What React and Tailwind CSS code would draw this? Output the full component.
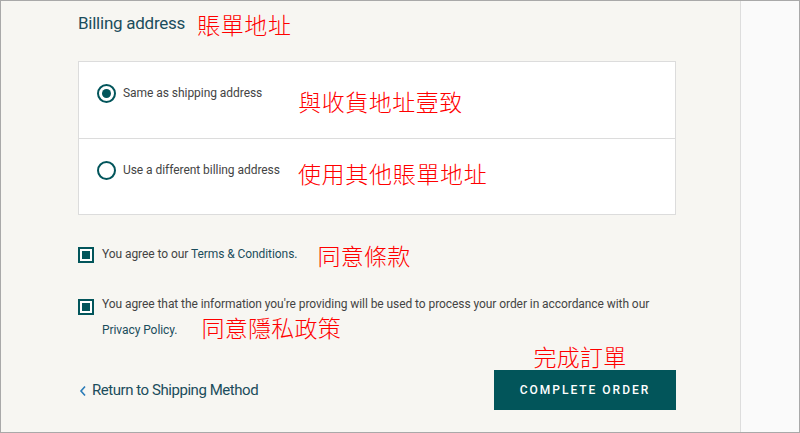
export default function App() {
  const zh = { fontFamily: '"Noto Sans CJK TC", "Noto Sans CJK SC", serif', fontWeight: 300 };
  const ro = { fontFamily: 'Roboto, "Liberation Sans", sans-serif' };
  return (
    <div className="w-[800px] h-[433px] border border-[#a9a9a9] flex overflow-hidden" style={ro}>
      <div className="w-[739px] h-full bg-[#f7f6f2] pl-[77px] pt-[10px]">
        <div className="flex items-center h-[26px]">
          <span className="text-[17px] text-[#1b4d5c] tracking-[-0.25px]">Billing address</span>
          <span className="ml-[12px] text-[23px] tracking-[0.6px] text-[#ff0000] leading-none" style={zh}>賬單地址</span>
        </div>
        <div className="mt-[24px] w-[598px] border border-[#dcdcdc] bg-white">
          <div className="h-[76px] flex items-start pl-[18px] pt-[22px]">
            <div className="w-[19px] h-[19px] rounded-full border-[2.5px] border-[#02555b] flex items-center justify-center shrink-0">
              <div className="w-[9px] h-[9px] rounded-full bg-[#02555b]" />
            </div>
            <span className="ml-[7px] text-[12px] text-[#444] leading-[18px] tracking-[-0.05px]">Same as shipping address</span>
            <span className="ml-[36px] mt-[6px] text-[23px] tracking-[0.5px] leading-none text-[#ff0000]" style={zh}>與收貨地址壹致</span>
          </div>
          <div className="h-[76px] flex items-start pl-[18px] pt-[22px] border-t border-[#dcdcdc]">
            <div className="w-[19px] h-[19px] rounded-full border-[2px] border-[#02555b] shrink-0" />
            <span className="ml-[7px] text-[12px] text-[#444] leading-[18px] tracking-[-0.05px]">Use a different billing address</span>
            <span className="ml-[18px] mt-[1px] text-[23px] tracking-[0.7px] leading-none text-[#ff0000]" style={zh}>使用其他賬單地址</span>
          </div>
        </div>
        <div className="mt-[28px] flex items-start">
          <div className="mt-[4px] w-[16px] h-[16px] border-2 border-[#02555b] bg-white p-[2px] shrink-0">
            <div className="w-full h-full bg-[#02555b]" />
          </div>
          <span className="ml-[8px] text-[12px] leading-[23px] text-[#444] tracking-[-0.07px]">You agree to our <span className="text-[#1b4d5c]">Terms &amp; Conditions.</span></span>
          <span className="ml-[20px] mt-[1px] text-[23px] tracking-[0.3px] leading-none text-[#ff0000]" style={zh}>同意條款</span>
        </div>
        <div className="mt-[26px] flex items-start w-[598px]">
          <div className="mt-[6px] w-[16px] h-[16px] border-2 border-[#02555b] bg-white p-[2px] shrink-0">
            <div className="w-full h-full bg-[#02555b]" />
          </div>
          <p className="ml-[8px] text-[12px] leading-[23px] text-[#444] tracking-[-0.07px]">
            You agree that the information you're providing will be used to process your order in accordance with our{" "}
            <br />
            <span className="text-[#1b4d5c]">Privacy Policy.</span>
            <span className="ml-[24px] text-[23px] tracking-[0.3px] leading-none text-[#ff0000] align-[-3px]" style={zh}>同意隱私政策</span>
          </p>
        </div>
        <div className="w-[598px] flex justify-between items-end mt-[1px]">
          <div className="flex items-center h-[41px] text-[15px] text-[#1b4d5c] tracking-[-0.45px]">
            <svg width="8" height="12" viewBox="0 0 8 12" className="ml-[1px] mr-[5px]">
              <path d="M6 1.5 L2 6 L6 10.5" fill="none" stroke="#2a7bb8" strokeWidth="1.6" />
            </svg>
            Return to Shipping Method
          </div>
          <div className="flex flex-col items-center">
            <span className="text-[23px] leading-[27px] tracking-[0.3px] text-[#ff0000] mr-[10px]" style={zh}>完成訂單</span>
            <div className="w-[182px] h-[40px] mb-[1px] bg-[#02555a] flex items-center justify-center text-white text-[12px] font-medium tracking-[2px]">
              COMPLETE ORDER
            </div>
          </div>
        </div>
      </div>
      <div className="flex-1 h-full bg-[#fafafa] border-l border-[#dddddd]" />
    </div>
  );
}
